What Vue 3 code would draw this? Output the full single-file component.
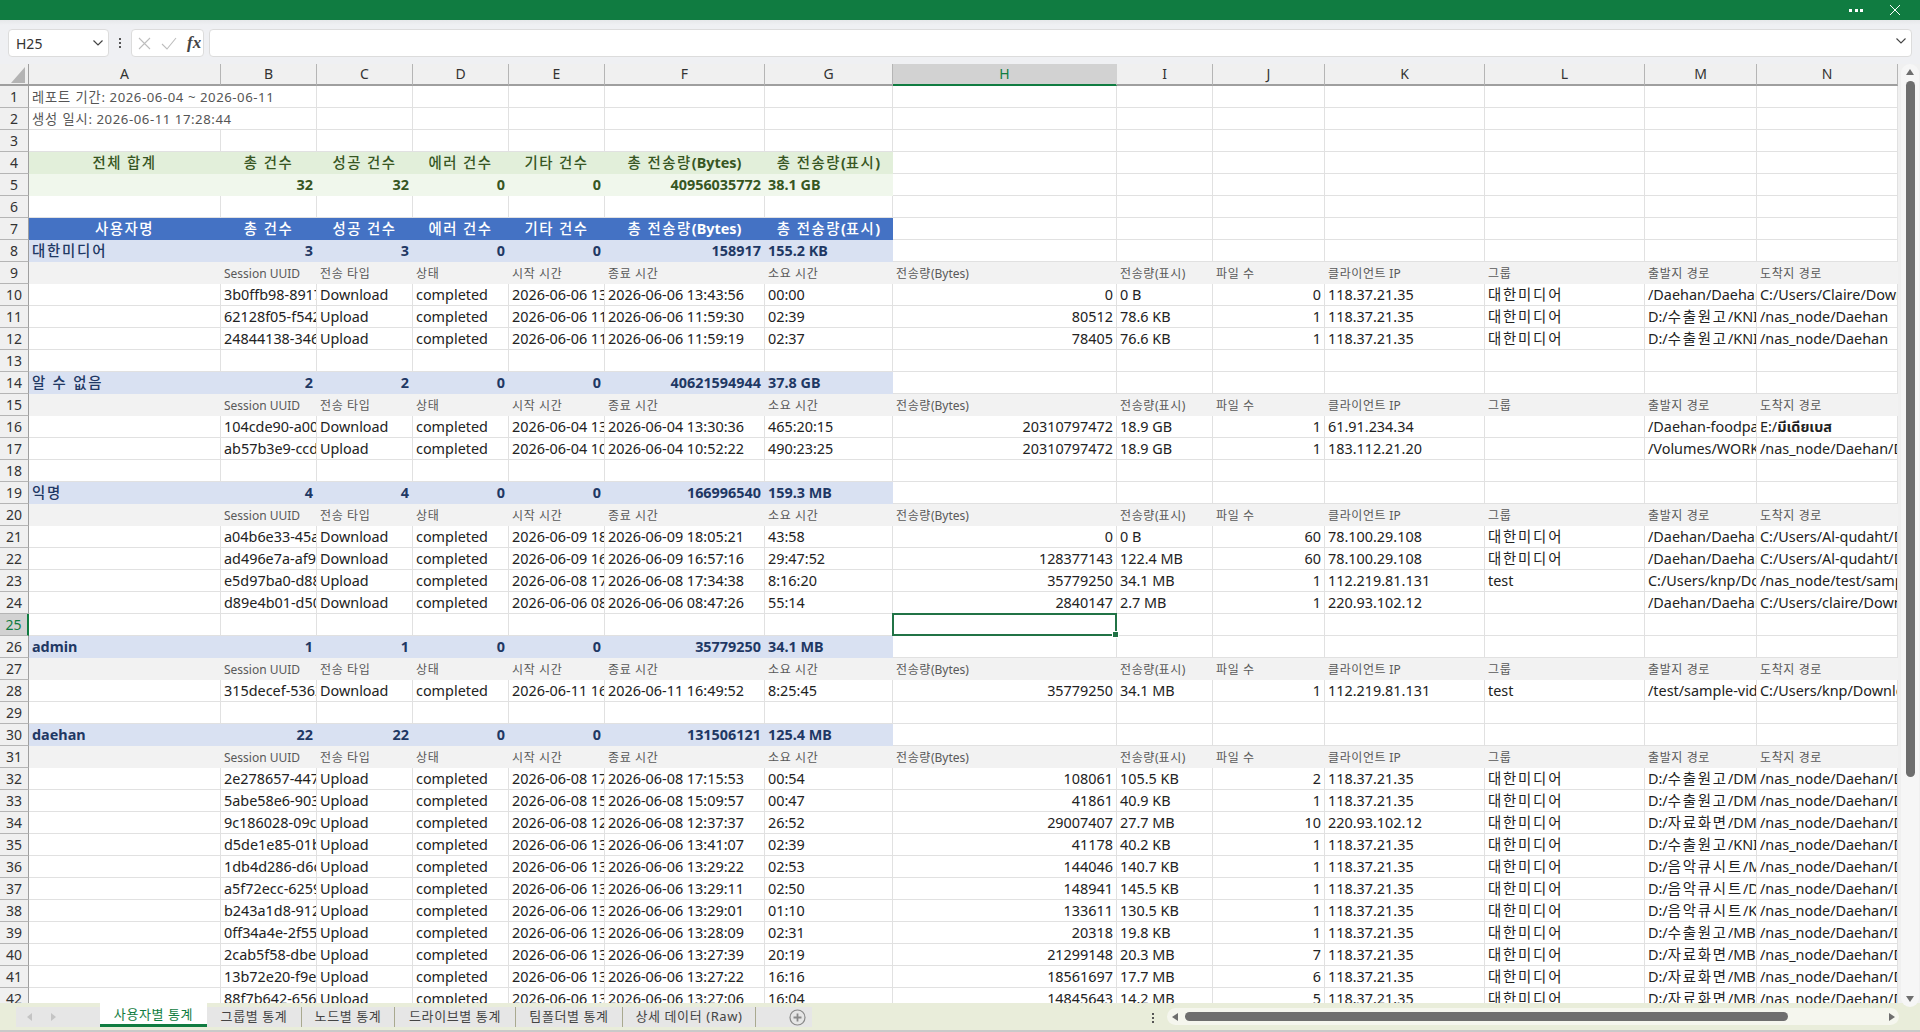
<script setup>
const columns = ['A','B','C','D','E','F','G','H','I','J','K','L','M','N']
const summary = ['총 건수','성공 건수','에러 건수','기타 건수','총 전송량(Bytes)','총 전송량(표시)']
const detailHead = ['','Session UUID','전송 타입','상태','시작 시간','종료 시간','소요 시간','전송량(Bytes)','전송량(표시)','파일 수','클라이언트 IP','그룹','출발지 경로','도착지 경로']
const MEDIA = '대한미디어'
const NAS = '/nas_node/Daehan/Documents'
const d = (id, type, day, hh, end, dur, bytes, size, files, ip, group, from, to) =>
  ({ kind: 'data', cells: ['', id, type, 'completed', `${day} ${hh}:00:00`, `${day} ${end}`, dur, bytes, size, files, ip, group, from, to] })
const blank = () => ({ kind: 'plain', cells: Array(14).fill('') })
const green = (first, kind) => ({ kind, cells: [first, ...summary] })
const group = (name, a, b, c, e, bytes, size) => ({ kind: 'group', cells: [name, a, b, c, e, bytes, size] })
const det = () => ({ kind: 'detail', cells: detailHead })

const spec = [
  { kind: 'title', cells: ['레포트 기간: 2026-06-04 ~ 2026-06-11'] },
  { kind: 'title', cells: ['생성 일시: 2026-06-11 17:28:44'] },
  blank(),
  green('전체 합계', 'ghead'),
  { kind: 'total', cells: ['', '32', '32', '0', '0', '40956035772', '38.1 GB'] },
  blank(),
  green('사용자명', 'bhead'),
  group(MEDIA, '3', '3', '0', '0', '158917', '155.2 KB'),
  det(),
  d('3b0ffb98-8917-4a', 'Download', '2026-06-06', '13', '13:43:56', '00:00', '0', '0 B', '0', '118.37.21.35', MEDIA, '/Daehan/Daehan-media', 'C:/Users/Claire/Downloads'),
  d('62128f05-f542-4b', 'Upload', '2026-06-06', '11', '11:59:30', '02:39', '80512', '78.6 KB', '1', '118.37.21.35', MEDIA, 'D:/수출원고/KNI/file', '/nas_node/Daehan'),
  d('24844138-3461-4c', 'Upload', '2026-06-06', '11', '11:59:19', '02:37', '78405', '76.6 KB', '1', '118.37.21.35', MEDIA, 'D:/수출원고/KNI/file', '/nas_node/Daehan'),
  blank(),
  group('알 수 없음', '2', '2', '0', '0', '40621594944', '37.8 GB'),
  det(),
  d('104cde90-a003-4a', 'Download', '2026-06-04', '13', '13:30:36', '465:20:15', '20310797472', '18.9 GB', '1', '61.91.234.34', '', '/Daehan-foodpack/file', 'E:/มีเดียเบส'),
  d('ab57b3e9-ccd1-4b', 'Upload', '2026-06-04', '10', '10:52:22', '490:23:25', '20310797472', '18.9 GB', '1', '183.112.21.20', '', '/Volumes/WORK/file', NAS),
  blank(),
  group('익명', '4', '4', '0', '0', '166996540', '159.3 MB'),
  det(),
  d('a04b6e33-45ab-4a', 'Download', '2026-06-09', '18', '18:05:21', '43:58', '0', '0 B', '60', '78.100.29.108', MEDIA, '/Daehan/Daehan-media', 'C:/Users/Al-qudaht/Downloads'),
  d('ad496e7a-af91-4b', 'Download', '2026-06-09', '16', '16:57:16', '29:47:52', '128377143', '122.4 MB', '60', '78.100.29.108', MEDIA, '/Daehan/Daehan-media', 'C:/Users/Al-qudaht/Downloads'),
  d('e5d97ba0-d88c-4c', 'Upload', '2026-06-08', '17', '17:34:38', '8:16:20', '35779250', '34.1 MB', '1', '112.219.81.131', 'test', 'C:/Users/knp/Documents', '/nas_node/test/sample-video'),
  d('d89e4b01-d50e-4d', 'Download', '2026-06-06', '08', '08:47:26', '55:14', '2840147', '2.7 MB', '1', '220.93.102.12', '', '/Daehan/Daehan-media', 'C:/Users/claire/Downloads'),
  blank(),
  group('admin', '1', '1', '0', '0', '35779250', '34.1 MB'),
  det(),
  d('315decef-5362-4a', 'Download', '2026-06-11', '16', '16:49:52', '8:25:45', '35779250', '34.1 MB', '1', '112.219.81.131', 'test', '/test/sample-video', 'C:/Users/knp/Downloads'),
  blank(),
  group('daehan', '22', '22', '0', '0', '131506121', '125.4 MB'),
  det(),
  d('2e278657-4471-4a', 'Upload', '2026-06-08', '17', '17:15:53', '00:54', '108061', '105.5 KB', '2', '118.37.21.35', MEDIA, 'D:/수출원고/DMC/file', NAS),
  d('5abe58e6-9035-4b', 'Upload', '2026-06-08', '15', '15:09:57', '00:47', '41861', '40.9 KB', '1', '118.37.21.35', MEDIA, 'D:/수출원고/DMC/file', NAS),
  d('9c186028-09c2-4c', 'Upload', '2026-06-08', '12', '12:37:37', '26:52', '29007407', '27.7 MB', '10', '220.93.102.12', MEDIA, 'D:/자료화면/DMC/file', NAS),
  d('d5de1e85-01b3-4d', 'Upload', '2026-06-06', '13', '13:41:07', '02:39', '41178', '40.2 KB', '1', '118.37.21.35', MEDIA, 'D:/수출원고/KNI/file', NAS),
  d('1db4d286-d6c4-4e', 'Upload', '2026-06-06', '13', '13:29:22', '02:53', '144046', '140.7 KB', '1', '118.37.21.35', MEDIA, 'D:/음악큐시트/M/file', NAS),
  d('a5f72ecc-6259-4f', 'Upload', '2026-06-06', '13', '13:29:11', '02:50', '148941', '145.5 KB', '1', '118.37.21.35', MEDIA, 'D:/음악큐시트/D/file', NAS),
  d('b243a1d8-9125-4a', 'Upload', '2026-06-06', '13', '13:29:01', '01:10', '133611', '130.5 KB', '1', '118.37.21.35', MEDIA, 'D:/음악큐시트/K/file', NAS),
  d('0ff34a4e-2f55-4b', 'Upload', '2026-06-06', '13', '13:28:09', '02:31', '20318', '19.8 KB', '1', '118.37.21.35', MEDIA, 'D:/수출원고/MBC/file', NAS),
  d('2cab5f58-dbe1-4c', 'Upload', '2026-06-06', '13', '13:27:39', '20:19', '21299148', '20.3 MB', '7', '118.37.21.35', MEDIA, 'D:/자료화면/MBC/file', NAS),
  d('13b72e20-f9e2-4d', 'Upload', '2026-06-06', '13', '13:27:22', '16:16', '18561697', '17.7 MB', '6', '118.37.21.35', MEDIA, 'D:/자료화면/MBC/file', NAS),
  d('88f7b642-656a-4e', 'Upload', '2026-06-06', '13', '13:27:06', '16:04', '14845643', '14.2 MB', '5', '118.37.21.35', MEDIA, 'D:/자료화면/MBC/file', NAS),
]

// Hangul and Thai runs are styled apart from the Latin text around them.
function splitRuns(text) {
  return text
    .split(/([가-힣]+(?: [가-힣]+)*|[\u0E00-\u0E7F]+)/)
    .filter(Boolean)
    .map((t) => ({
      t,
      c: /[가-힣]/.test(t) ? 'h' : /[\u0E00-\u0E7F]/.test(t) ? 'th' : '',
    }))
}

function buildCell(kind, i, text) {
  const cls = []
  const filled = i < 7 && ['ghead', 'bhead', 'total', 'group'].includes(kind)
  if (filled) cls.push('fill', 'f-' + kind)
  if (kind === 'detail') cls.push('fill', 'f-detail')
  if (kind === 'ghead' || kind === 'bhead') cls.push('center')
  if ((kind === 'total' || kind === 'group') && i >= 1 && i <= 5) cls.push('right')
  if (kind === 'data' && (i === 7 || i === 9)) cls.push('right')
  if (kind === 'title' && i === 0) cls.push('span2', 'small')
  return { runs: splitRuns(text), cls }
}

const rows = spec.map((r, idx) => {
  const cells = []
  for (let i = 0; i < 14; i++) {
    if (r.kind === 'title' && i === 1) continue
    const c = buildCell(r.kind, i, r.cells[i] || '')
    c.selected = idx === 24 && i === 7
    cells.push(c)
  }
  return { n: idx + 1, kind: r.kind, cells, active: idx === 24 }
})

const tabs = [
  { name: '사용자별 통계', w: 107, active: true },
  { name: '그룹별 통계', w: 95 },
  { name: '노드별 통계', w: 93 },
  { name: '드라이브별 통계', w: 121 },
  { name: '팀폴더별 통계', w: 107 },
  { name: '상세 데이터 (Raw)', w: 133 },
]
</script>

<template>
  <div class="app">
    <header class="titlebar">
      <span class="more"><i></i><i></i><i></i></span>
      <svg class="close" width="12" height="12" viewBox="0 0 12 12"><path d="M1 1l10 10M11 1L1 11" stroke="#fff" stroke-width="1" fill="none"/></svg>
    </header>

    <div class="formula">
      <div class="namebox">
        <span>H25</span>
        <svg width="10" height="6" viewBox="0 0 10 6"><path d="M.5.5L5 5 9.5.5" stroke="#444" stroke-width="1.2" fill="none"/></svg>
      </div>
      <span class="vdots"><i></i><i></i><i></i></span>
      <div class="fxbox">
        <svg width="13" height="13" viewBox="0 0 13 13"><path d="M1 1l11 11M12 1L1 12" stroke="#bdbdbd" stroke-width="1.1" fill="none"/></svg>
        <svg width="16" height="13" viewBox="0 0 16 13"><path d="M1 7l5 5L15 1" stroke="#bdbdbd" stroke-width="1.1" fill="none"/></svg>
        <span class="fx">fx</span>
      </div>
      <div class="input">
        <svg width="10" height="6" viewBox="0 0 10 6"><path d="M.5.5L5 5 9.5.5" stroke="#444" stroke-width="1.1" fill="none"/></svg>
      </div>
    </div>

    <div class="workarea">
      <div class="sheet">
        <div class="grid-row head-row">
          <div class="corner">
            <svg width="14" height="16" viewBox="0 0 14 16"><path d="M14 0v16H0z" fill="#b4b4b4"/></svg>
          </div>
          <div v-for="c in columns" :key="c" class="col-head" :class="{ sel: c === 'H' }">{{ c }}</div>
        </div>
        <div v-for="r in rows" :key="r.n" class="grid-row">
          <div class="row-head" :class="{ sel: r.active }">{{ r.n }}</div>
          <div v-for="(c, i) in r.cells" :key="i" class="cell" :class="c.cls">
            <span v-for="(p, j) in c.runs" :key="j" :class="p.c">{{ p.t }}</span>
            <div v-if="c.selected" class="selection"><span class="handle"></span></div>
          </div>
        </div>
      </div>
      <aside class="vscroll">
        <div class="vpill">
          <span class="tri up"></span>
          <span class="vthumb"></span>
          <span class="tri down"></span>
        </div>
      </aside>
    </div>

    <footer class="tabbar">
      <div class="strip">
        <div class="nav">
          <span class="navtri left"></span>
          <span class="navtri right"></span>
        </div>
        <div v-for="t in tabs" :key="t.name" class="tab" :class="{ active: t.active }" :style="{ width: t.w + 'px' }">{{ t.name }}</div>
        <div class="add">
          <svg width="17" height="17" viewBox="0 0 17 17"><circle cx="8.5" cy="8.5" r="7.5" fill="none" stroke="#8a8a8a" stroke-width="1.2"/><path d="M8.5 4.5v8M4.5 8.5h8" stroke="#8a8a8a" stroke-width="1.8"/></svg>
        </div>
      </div>
      <span class="vdots tabdots"><i></i><i></i><i></i></span>
      <div class="hpill">
        <span class="tri lft"></span>
        <span class="hthumb"></span>
        <span class="tri rgt"></span>
      </div>
    </footer>
  </div>
</template>

<style>
html, body { margin: 0; padding: 0; background: #fff; overflow: hidden; }
</style>

<style scoped>
.app {
  width: 1920px;
  height: 1032px;
  display: flex;
  flex-direction: column;
  overflow: hidden;
  font-family: "Noto Sans", "Noto Sans CJK KR", "Noto Sans Thai", "DejaVu Sans", sans-serif;
  font-size: 14.4px;
  color: #222;
  background: #f0f0f0;
}
.titlebar {
  height: 20px;
  flex: none;
  background: #107c41;
  display: flex;
  align-items: center;
  justify-content: flex-end;
  padding-right: 19px;
  gap: 26px;
}
.more { display: flex; gap: 2.5px; }
.more i { width: 3px; height: 3px; background: #fff; display: block; }
.close { display: block; }
.formula {
  height: 44px;
  flex: none;
  box-sizing: border-box;
  padding: 9px 8px 7px;
  display: flex;
  background: linear-gradient(#e6e8ea, #eff0f3 5px);
  align-items: stretch;
}
.namebox {
  width: 101px;
  box-sizing: border-box;
  background: #fff;
  border: 1px solid #dcdcdc;
  border-radius: 4px;
  display: flex;
  align-items: center;
  justify-content: space-between;
  padding: 0 5px 0 7px;
  font-size: 14px;
  color: #333;
}
.vdots {
  width: 22px;
  display: flex;
  flex-direction: column;
  align-items: center;
  justify-content: center;
  gap: 2px;
}
.vdots i { width: 2px; height: 2px; background: #555; display: block; }
.fxbox {
  width: 73px;
  box-sizing: border-box;
  background: #fff;
  border: 1px solid #dcdcdc;
  border-radius: 4px;
  display: flex;
  align-items: center;
  gap: 10px;
  padding-left: 6px;
}
.fx {
  font-family: "Liberation Serif", serif;
  font-style: italic;
  font-weight: 700;
  font-size: 17px;
  color: #444;
}
.input {
  flex: 1;
  margin-left: 5px;
  background: #fff;
  border: 1px solid #dcdcdc;
  border-radius: 4px;
  display: flex;
  align-items: center;
  justify-content: flex-end;
  padding: 0 5px 4px 0;
}
.workarea { flex: none; height: 939px; display: flex; }
.sheet { width: 1898px; height: 939px; flex: none; overflow: hidden; background: #fff; }
.grid-row {
  display: grid;
  grid-template-columns: 29px 192px 96px 96px 96px 96px 160px 128px 224px 96px 112px 160px 160px 112px 141px;
  height: 22px;
}
.corner {
  background: #f0f0f0;
  border-right: 1px solid #9f9f9f;
  border-bottom: 2px solid #9f9f9f;
  box-sizing: border-box;
  display: flex;
  justify-content: flex-end;
  align-items: flex-end;
  padding: 0 3px 1px 0;
}
.col-head {
  background: #f0f0f0;
  box-sizing: border-box;
  border-right: 1px solid #b5b5b5;
  border-bottom: 2px solid #9f9f9f;
  text-align: center;
  line-height: 20px;
  font-size: 14px;
  color: #333;
}
.col-head.sel { background: #d2d2d2; color: #107c41; border-bottom-color: #107c41; border-right-color: #d2d2d2; }
.row-head {
  background: #f0f0f0;
  box-sizing: border-box;
  border-right: 1px solid #9f9f9f;
  border-bottom: 1px solid #b5b5b5;
  text-align: center;
  line-height: 21px;
  font-size: 14px;
  color: #333;
}
.row-head.sel { background: #d2d2d2; color: #107c41; border-right: 2px solid #107c41; }
.cell {
  box-sizing: border-box;
  position: relative;
  border-right: 1px solid #e1e1e1;
  border-bottom: 1px solid #e1e1e1;
  padding: 0 3px;
  line-height: 21px;
  white-space: nowrap;
  overflow: hidden;
  min-width: 0;
  color: #222;
}
.h { letter-spacing: 1.8px; }
.th { font-weight: 700; }
.cell.span2 { grid-column: span 2; }
.cell.small { font-size: 13.2px; color: #555; line-height: 23px; letter-spacing: .55px; }
.cell.small .h { letter-spacing: .9px; }
.cell.right { text-align: right; }
.cell.center { text-align: center; }
.cell.fill { border-color: transparent; }
.f-ghead { background: #e2efda; color: #375623; font-weight: 700; }
.f-total { background: #f0f7ec; color: #375623; font-weight: 700; }
.f-bhead { background: #4472c4; color: #fff; font-weight: 700; }
.f-group { background: #d9e1f2; color: #1f3864; font-weight: 700; }
.f-ghead .h, .f-bhead .h { font-weight: 500; letter-spacing: 1.5px; }
.f-group .h { font-weight: 500; }
.cell.f-detail { background: #f2f2f2; color: #595959; font-size: 12px; line-height: 23px; }
.f-detail .h { letter-spacing: .6px; }
.selection {
  position: absolute;
  left: -1px;
  top: -1px;
  right: -1px;
  bottom: -1px;
  border: 2px solid #217346;
  box-sizing: border-box;
}
.cell:has(.selection) { overflow: visible; z-index: 2; }
.handle {
  position: absolute;
  right: -4px;
  bottom: -4px;
  width: 7px;
  height: 7px;
  box-sizing: border-box;
  background: #217346;
  border: 1px solid #fff;
}
.vscroll { flex: 1; display: flex; justify-content: flex-end; padding-right: 1px; position: relative; z-index: 2; }
.vpill {
  width: 18px;
  height: 943px;
  background: #f6f6f6;
  border-radius: 9px;
  display: flex;
  flex-direction: column;
  align-items: center;
  padding-top: 5px;
  box-sizing: border-box;
}
.vthumb {
  width: 9px;
  height: 696px;
  margin-top: 6px;
  background: #6e6e6e;
  border-radius: 5px;
}
.tri { width: 0; height: 0; display: block; flex: none; }
.tri.up { border: 4.5px solid transparent; border-top: 0; border-bottom: 6px solid #6e6e6e; }
.tri.down { border: 4.5px solid transparent; border-bottom: 0; border-top: 6px solid #6e6e6e; margin-top: 219px; }
.tabbar {
  flex: 1;
  background: #e9edda;
  border-bottom: 2px solid #c9c9c9;
  display: flex;
}
.strip {
  margin: 4px 0 3px 16px;
  width: 796px;
  background: #e6e6e6;
  display: flex;
}
.nav {
  width: 84px;
  display: flex;
  gap: 19px;
  align-items: center;
  padding-left: 11px;
  box-sizing: border-box;
}
.navtri { width: 0; height: 0; border: 4px solid transparent; display: block; }
.navtri.left { border-left: 0; border-right: 5px solid #c4c4c4; }
.navtri.right { border-right: 0; border-left: 5px solid #c4c4c4; }
.tab {
  box-sizing: border-box;
  text-align: center;
  font-size: 13px;
  letter-spacing: .6px;
  color: #444;
  border-right: 1px solid #a9a98f;
  line-height: 18px;
  white-space: nowrap;
}
.tab.active {
  background: #fff;
  color: #107c41;
  margin-top: -4px;
  height: 24px;
  border-right: 0;
  border-bottom: 3px solid #107c41;
  line-height: 22px;
}
.add { flex: 1; display: flex; justify-content: center; align-items: center; padding-left: 26px; box-sizing: border-box; }
.tabdots { width: 14px; margin-left: 334px; padding-top: 3px; }
.hpill {
  width: 732px;
  margin: 5px 0 5px 7px;
  background: #f5f6ee;
  border-radius: 9px;
  display: flex;
  align-items: center;
  padding: 0 4px 0 5px;
  box-sizing: border-box;
}
.hthumb { width: 603px; height: 9px; background: #6e6e6e; border-radius: 5px; margin-left: 7px; }
.tri.lft { border: 4.5px solid transparent; border-left: 0; border-right: 6px solid #6e6e6e; }
.tri.rgt { border: 4.5px solid transparent; border-right: 0; border-left: 6px solid #6e6e6e; margin-left: auto; }
</style>
